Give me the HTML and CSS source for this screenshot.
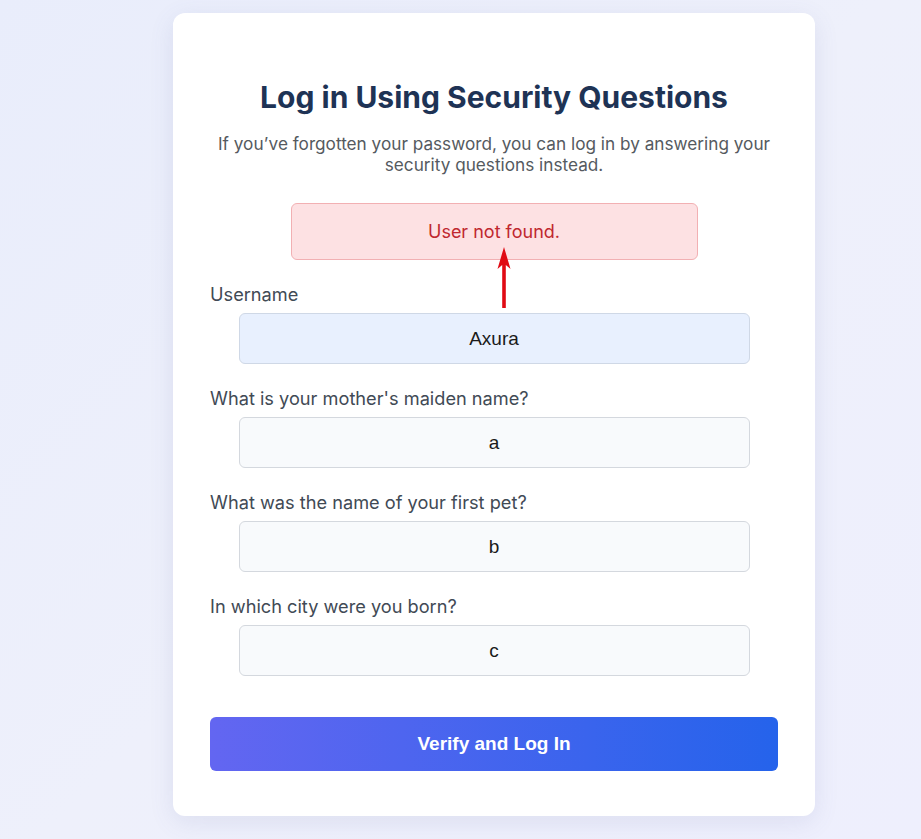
FILE: index.html
```html
<!DOCTYPE html>
<html lang="en">
<head>
<meta charset="utf-8">
<title>Log in Using Security Questions</title>
<link rel="stylesheet" href="styles.css">
</head>
<body>
<main class="card">
  <h1 class="title">Log in Using Security Questions</h1>
  <p class="subtitle">If you’ve forgotten your password, you can log in by answering your security questions instead.</p>
  <div class="form-area">
    <div class="error">User not found.</div>
    <svg class="arrow" width="14" height="62" viewBox="0 0 14 62" aria-hidden="true">
      <path d="M7 0 L13.5 22 L8.8 18 L8.8 61 L5.2 61 L5.2 18 L0.5 22 Z" fill="#e00b14"/>
    </svg>
    <div class="field">
      <label class="label">Username</label>
      <div class="input filled">Axura</div>
    </div>
    <div class="field">
      <label class="label">What is your mother's maiden name?</label>
      <div class="input">a</div>
    </div>
    <div class="field">
      <label class="label">What was the name of your first pet?</label>
      <div class="input">b</div>
    </div>
    <div class="field">
      <label class="label">In which city were you born?</label>
      <div class="input">c</div>
    </div>
    <button class="submit" type="button">Verify and Log In</button>
  </div>
</main>
</body>
</html>
```
FILE: styles.css
```css
html, body {
  margin: 0;
  padding: 0;
}
body {
  min-height: 839px;
  background: linear-gradient(135deg, #e9edfb 0%, #eef0fb 50%, #eeeffd 100%);
  font-family: Inter, "Noto Sans", sans-serif;
  overflow: hidden;
}
.card {
  box-sizing: border-box;
  width: 642px;
  margin: 13px 0 0 173px;
  padding: 66px 37px 45px;
  background: #ffffff;
  border-radius: 12px;
  box-shadow: 0 6px 24px rgba(90, 100, 160, 0.12);
}
.title {
  margin: 0;
  font-size: 30px;
  line-height: 36px;
  font-weight: 700;
  color: #1e3355;
  text-align: center;
}
.subtitle {
  margin: 18px 0 0;
  padding: 0;
  font-size: 17.2px;
  line-height: 21px;
  color: #555a60;
  text-align: center;
}
.form-area {
  position: relative;
  display: flex;
  flex-direction: column;
}
.error {
  box-sizing: border-box;
  width: 407px;
  height: 57px;
  margin: 28px auto 0;
  display: flex;
  align-items: center;
  justify-content: center;
  background: #fde1e3;
  border: 1px solid #f2b0b3;
  border-radius: 6px;
  color: #c0282f;
  font-size: 18px;
}
.arrow {
  position: absolute;
  left: 287px;
  top: 72px;
}
.field {
  display: flex;
  flex-direction: column;
  margin-top: 23px;
}
.label {
  font-size: 18.2px;
  line-height: 22px;
  color: #414a55;
  margin-bottom: 8px;
}
.input {
  box-sizing: border-box;
  width: 511px;
  height: 51px;
  margin: 0 auto;
  display: flex;
  align-items: center;
  justify-content: center;
  background: #f8fafc;
  border: 1px solid #d4d8de;
  border-radius: 6px;
  font-family: "Liberation Sans", Arial, sans-serif;
  font-size: 19px;
  color: #1a1a1a;
}
.input.filled {
  background: #e8f0fe;
  border-color: #cfd8e6;
}
.submit {
  margin-top: 41px;
  height: 54px;
  border: none;
  border-radius: 6px;
  background: linear-gradient(90deg, #6366f1 0%, #2563eb 100%);
  color: #ffffff;
  font-family: "Liberation Sans", Arial, sans-serif;
  font-weight: 700;
  font-size: 19px;
  cursor: pointer;
}
```
